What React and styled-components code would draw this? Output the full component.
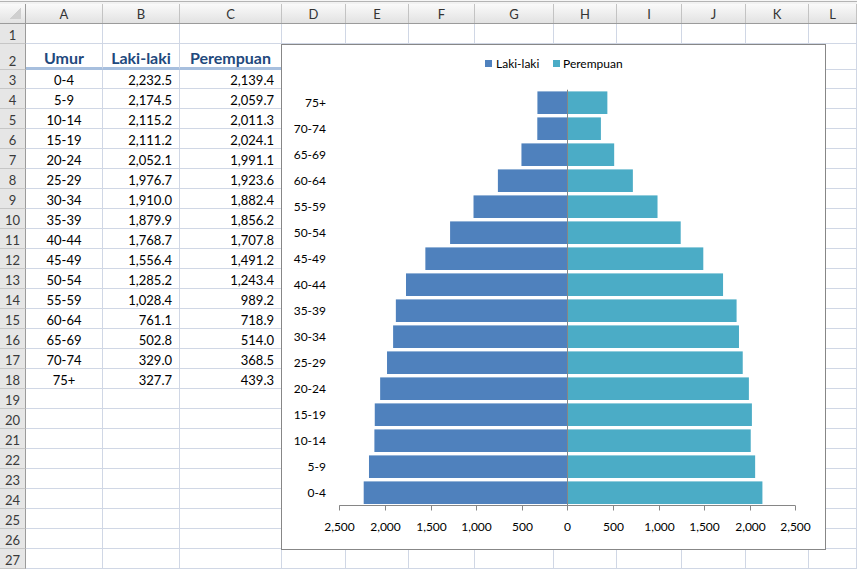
import React from "react";
import styled, { createGlobalStyle } from "styled-components";

const GlobalStyle = createGlobalStyle`
  html, body { margin: 0; padding: 0; background: #fff; }
  body { font-family: Lato, "Liberation Sans", sans-serif; overflow: hidden; }
`;

const COLS = "26px 77px 77px 102px 64px 63px 66px 79px 63px 65px 64px 63px 1fr";
const LETTERS = ["A", "B", "C", "D", "E", "F", "G", "H", "I", "J", "K", "L"];

const data = [
  ["0-4", 2232.5, 2139.4],
  ["5-9", 2174.5, 2059.7],
  ["10-14", 2115.2, 2011.3],
  ["15-19", 2111.2, 2024.1],
  ["20-24", 2052.1, 1991.1],
  ["25-29", 1976.7, 1923.6],
  ["30-34", 1910.0, 1882.4],
  ["35-39", 1879.9, 1856.2],
  ["40-44", 1768.7, 1707.8],
  ["45-49", 1556.4, 1491.2],
  ["50-54", 1285.2, 1243.4],
  ["55-59", 1028.4, 989.2],
  ["60-64", 761.1, 718.9],
  ["65-69", 502.8, 514.0],
  ["70-74", 329.0, 368.5],
  ["75+", 327.7, 439.3],
];

const fmt = (v) =>
  v.toLocaleString("en-US", { minimumFractionDigits: 1, maximumFractionDigits: 1 });

const MALE = "#4f81bd";
const FEMALE = "#4bacc6";

const Sheet = styled.div`
  position: relative;
  width: 857px;
  height: 569px;
  overflow: hidden;
  display: flex;
  flex-direction: column;
`;

const TopEdge = styled.div`
  height: 4px;
  background: linear-gradient(#f6f6f6 0 1px, #b4b4b4 1px 2px, #f2f2f2 2px);
`;

const HeaderRow = styled.div`
  display: grid;
  grid-template-columns: ${COLS};
  height: 20px;
  box-sizing: border-box;
  border-bottom: 1px solid #9b9b9b;
  background: linear-gradient(#fafafa, #e2e2e2);
`;

const ColHead = styled.div`
  display: flex;
  align-items: center;
  justify-content: center;
  border-right: 1px solid #c3c3c3;
  font-size: 13px;
  color: #333;
`;

const Corner = styled(ColHead)`
  border-right: 1px solid #9b9b9b;
  background: linear-gradient(to bottom right, transparent 50%, #cfcfcf 50%) no-repeat;
  background-size: 11px 11px;
  background-position: right 4px bottom 4px;
`;

const Row = styled.div`
  display: grid;
  grid-template-columns: ${COLS};
  height: ${(p) => p.$h}px;
`;

const RowHead = styled.div`
  display: flex;
  align-items: flex-end;
  justify-content: center;
  box-sizing: border-box;
  background: #e6e6e6;
  border-right: 1px solid #9b9b9b;
  border-bottom: 1px solid #c6c6c6;
  font-size: 13px;
  line-height: 16px;
  color: #3a3a3a;
`;

const Cell = styled.div`
  display: flex;
  align-items: flex-end;
  justify-content: ${(p) => p.$align || "flex-start"};
  box-sizing: border-box;
  padding-right: ${(p) => (p.$align === "flex-end" ? 7 : 0)}px;
  border-right: 1px solid #d0d7e5;
  border-bottom: 1px solid #d0d7e5;
  font-size: 13px;
  line-height: 16px;
  color: #000;
  white-space: nowrap;
`;

const HeadCell = styled(Cell)`
  justify-content: center;
  padding-right: 0;
  font-size: 16px;
  font-weight: 700;
  line-height: 19px;
  color: #1f497d;
  border-bottom: 3px solid #a7bfde;
`;

const ChartFrame = styled.div`
  position: absolute;
  left: 281px;
  top: 44px;
  width: 545px;
  height: 506px;
  box-sizing: border-box;
  border: 1px solid #878787;
  background: #fff;
`;

const ChartSvg = styled.svg`
  display: block;
  font-family: Lato, "Liberation Sans", sans-serif;
  font-size: 12px;
  fill: #000;
`;

const X0 = 285.3;
const SCALE = 228 / 2500;
const AXIS_Y = 460.5;
const PLOT_TOP = 44.7;
const BAND = 26;

function Pyramid() {
  const rows = [...data].reverse();
  const ticks = [-2500, -2000, -1500, -1000, -500, 0, 500, 1000, 1500, 2000, 2500];
  return (
    <ChartSvg width="543" height="504" viewBox="0 0 543 504">
      <rect x="203" y="15" width="7" height="7" fill={MALE} />
      <text x="214" y="22.6">Laki-laki</text>
      <rect x="271" y="15" width="7" height="7" fill={FEMALE} />
      <text x="281" y="22.6">Perempuan</text>

      {rows.map(([label, m, f], i) => {
        const top = PLOT_TOP + i * BAND;
        return (
          <g key={label}>
            <rect x={X0 - m * SCALE} y={top + 1.7} width={m * SCALE} height="22.6" fill={MALE} />
            <rect x={X0} y={top + 1.7} width={f * SCALE} height="22.6" fill={FEMALE} />
            <text x="44" y={top + 13} dy="0.36em" textAnchor="end">
              {label}
            </text>
          </g>
        );
      })}

      <line x1="285.5" y1={PLOT_TOP} x2="285.5" y2={AXIS_Y} stroke="#868686" />
      <line x1={X0 - 2500 * SCALE} y1={AXIS_Y} x2={X0 + 2500 * SCALE} y2={AXIS_Y} stroke="#868686" />
      {ticks.map((t) => {
        const x = Math.round(X0 + t * SCALE) + 0.5;
        return (
          <g key={t}>
            <line x1={x} y1={AXIS_Y} x2={x} y2={AXIS_Y + 5} stroke="#868686" />
            <text x={x} y="486" textAnchor="middle">
              {Math.abs(t).toLocaleString("en-US")}
            </text>
          </g>
        );
      })}
    </ChartSvg>
  );
}

export default function App() {
  const heights = [20, 26, 19, ...Array(24).fill(20)];
  return (
    <>
      <GlobalStyle />
      <Sheet>
        <TopEdge />
        <HeaderRow>
          <Corner />
          {LETTERS.map((l) => (
            <ColHead key={l}>{l}</ColHead>
          ))}
        </HeaderRow>
        {heights.map((h, i) => {
          const n = i + 1;
          const d = n >= 3 && n <= 18 ? data[n - 3] : null;
          return (
            <Row key={n} $h={h}>
              <RowHead>{n}</RowHead>
              {n === 2 ? (
                <>
                  <HeadCell>Umur</HeadCell>
                  <HeadCell>Laki-laki</HeadCell>
                  <HeadCell>Perempuan</HeadCell>
                </>
              ) : d ? (
                <>
                  <Cell $align="center">{d[0]}</Cell>
                  <Cell $align="flex-end">{fmt(d[1])}</Cell>
                  <Cell $align="flex-end">{fmt(d[2])}</Cell>
                </>
              ) : (
                <>
                  <Cell />
                  <Cell />
                  <Cell />
                </>
              )}
              {LETTERS.slice(3).map((l) => (
                <Cell key={l} />
              ))}
            </Row>
          );
        })}
        <ChartFrame>
          <Pyramid />
        </ChartFrame>
      </Sheet>
    </>
  );
}
